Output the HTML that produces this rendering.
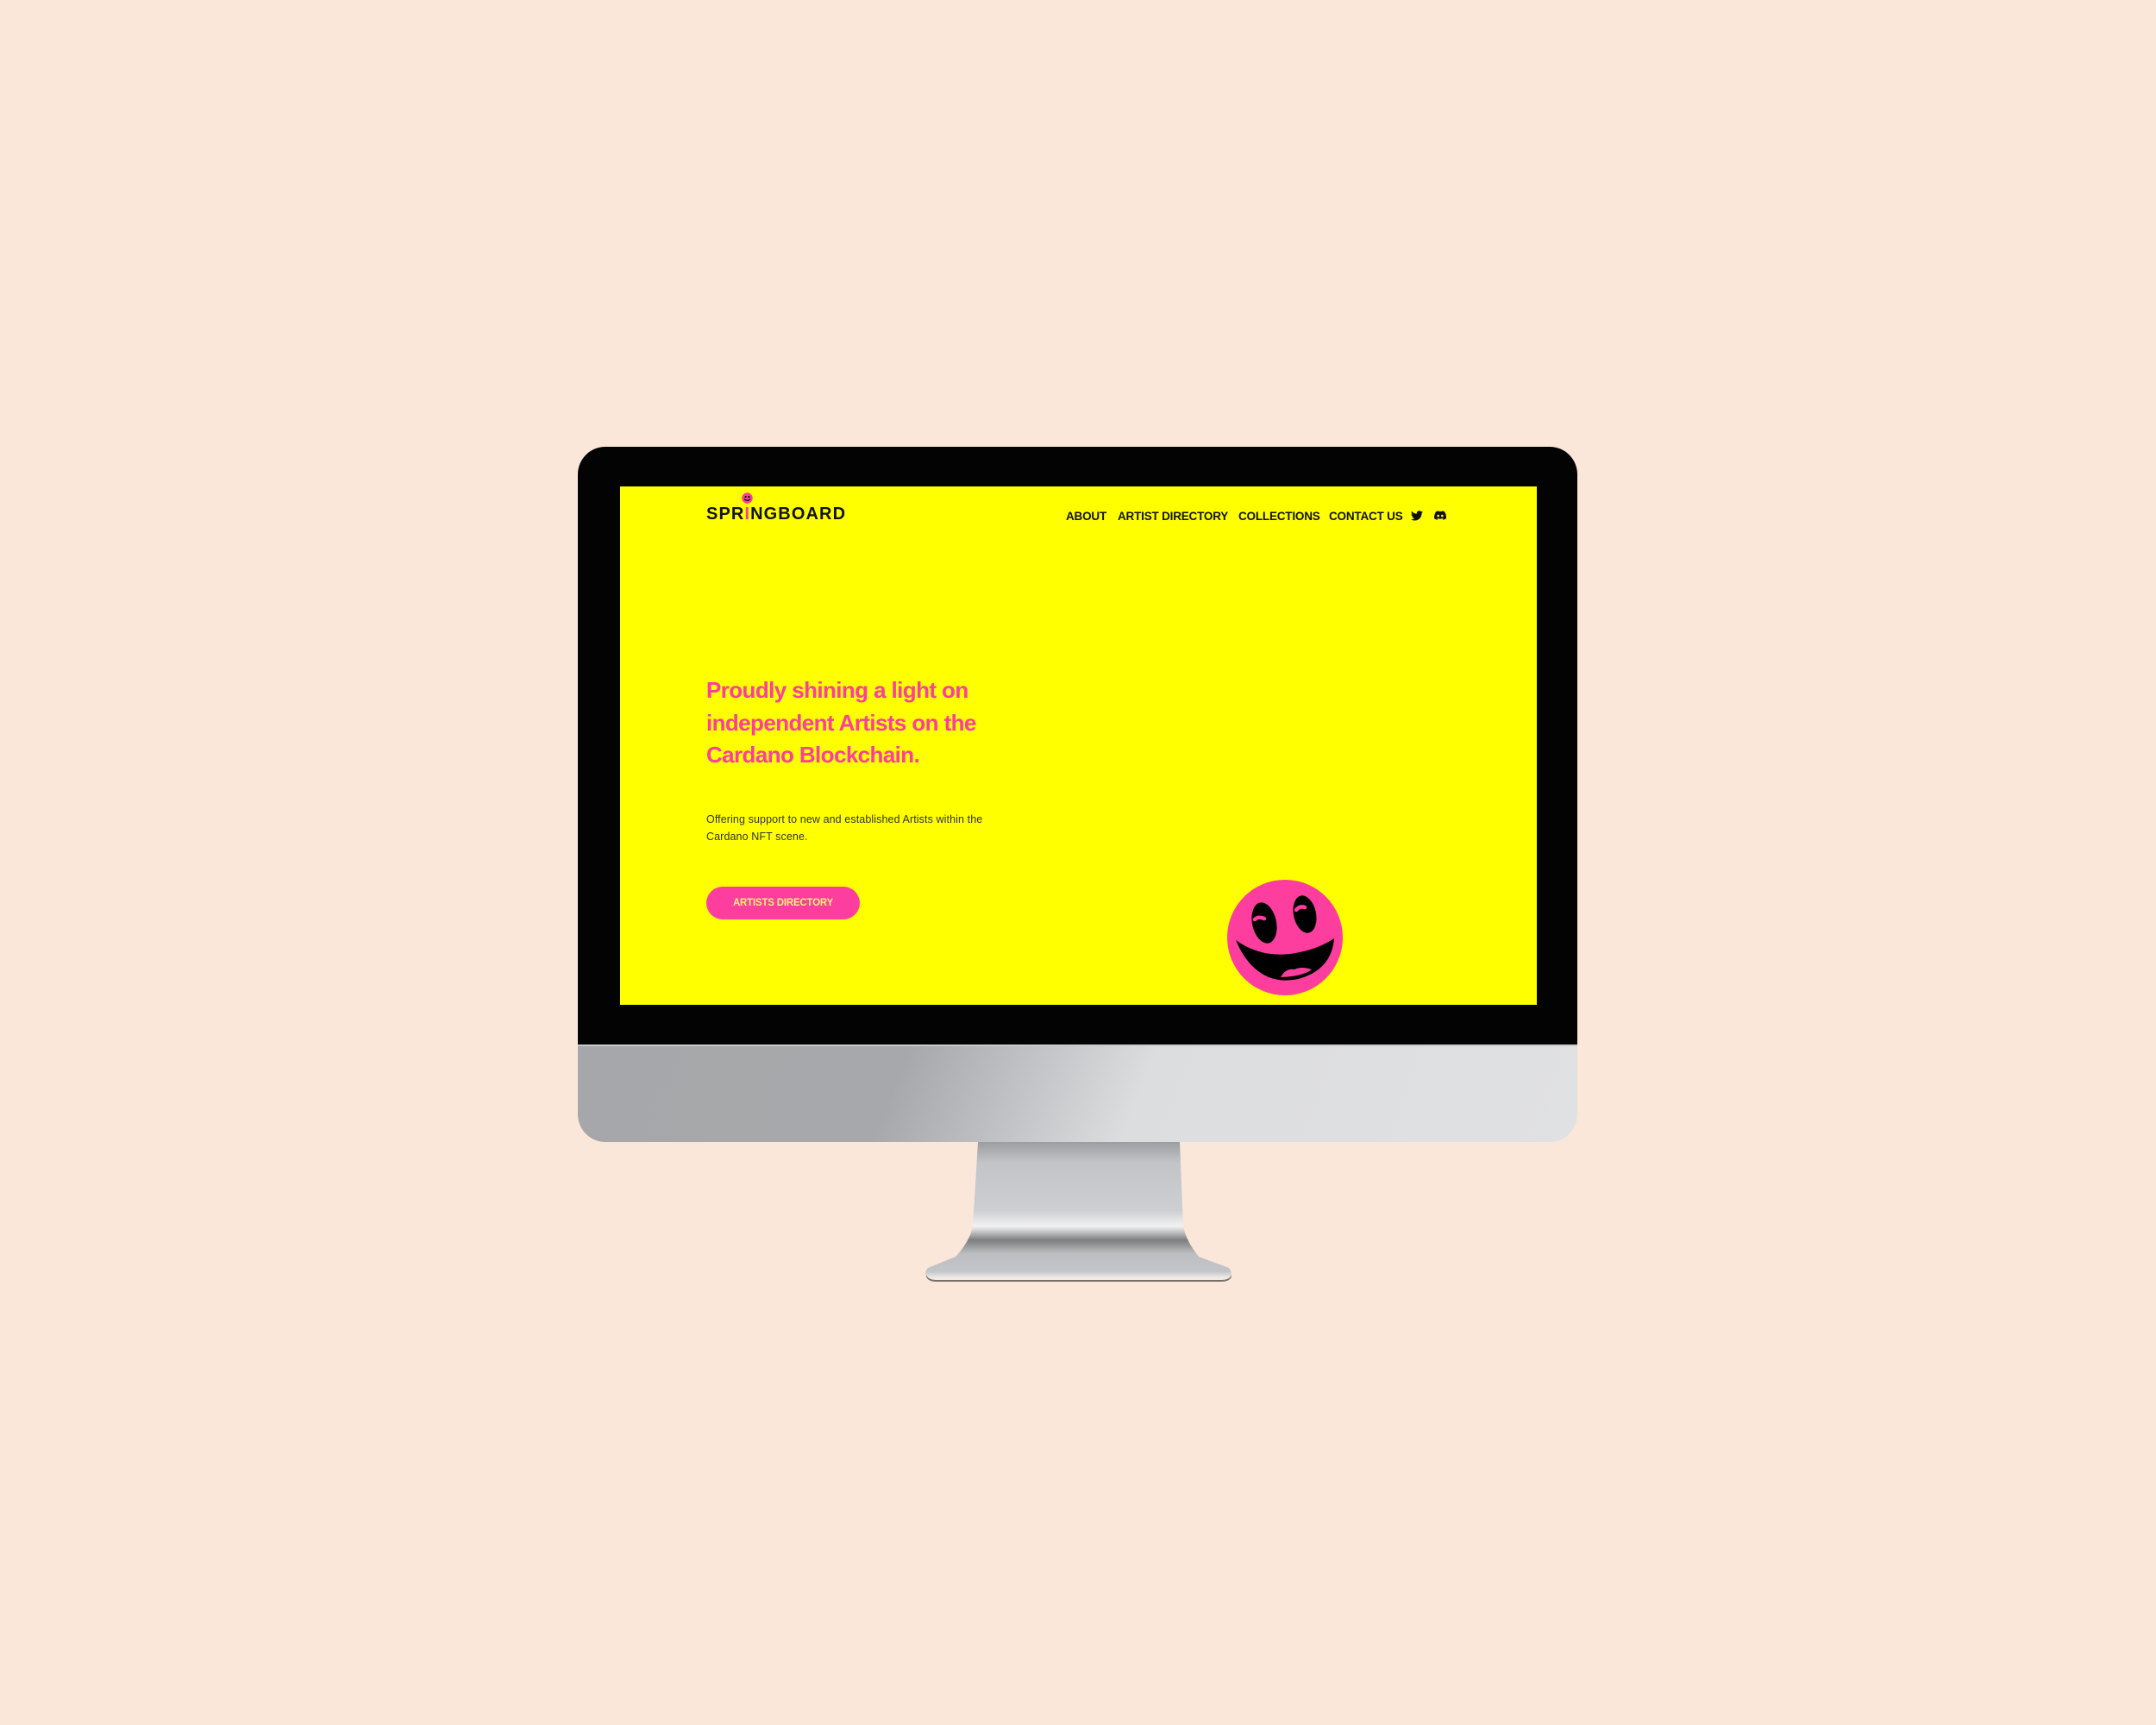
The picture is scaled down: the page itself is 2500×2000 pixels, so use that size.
<!DOCTYPE html>
<html><head><style>
*{margin:0;padding:0;box-sizing:border-box}
body{width:2500px;height:2000px;background:#fbe7d9;position:relative;overflow:hidden;font-family:"Liberation Sans",sans-serif}
.frame{position:absolute;left:670px;top:518px;width:1159px;height:720px;background:#030303;border-radius:32px 32px 0 0}
.chin{position:absolute;left:670px;top:1211px;width:1159px;height:113px;border-radius:0 0 32px 32px;border-top:2px solid #c9cacc;background:linear-gradient(112deg,#a6a7aa 0%,#a7a8ab 32%,#c3c4c7 45%,#dcdddf 56%,#e0e1e2 100%)}
.screen{position:absolute;left:719px;top:564px;width:1063px;height:601px;background:#ffff00;overflow:hidden}
.abs{position:absolute;white-space:nowrap}
.logo{left:100px;top:21px;font-weight:bold;font-size:20px;letter-spacing:1.1px;color:#111}
.nav{top:27px;font-weight:bold;font-size:13.5px;color:#111;letter-spacing:-0.2px}
h1{position:absolute;left:100px;top:218px;font-size:26px;line-height:37.5px;font-weight:bold;color:#fd3e9e;letter-spacing:-0.6px;white-space:nowrap}
p{position:absolute;left:100px;top:376px;font-size:12.5px;line-height:20px;color:#333;letter-spacing:0.1px;white-space:nowrap}
.btn{position:absolute;left:100px;top:464px;width:178px;height:38px;border-radius:19px;background:#fd3e9e;color:#fff27a;font-weight:bold;font-size:11.5px;text-align:center;line-height:38px;letter-spacing:-0.2px}
</style></head><body>
<div class="frame"></div>
<div class="chin"></div>
<svg class="abs" style="left:1060px;top:1322px" width="380" height="170" viewBox="0 0 380 170">
<defs><linearGradient id="n" x1="0" y1="0" x2="0" y2="1">
<stop offset="0" stop-color="#9c9da0"/><stop offset="0.15" stop-color="#c3c4c7"/><stop offset="0.5" stop-color="#cdced1"/><stop offset="0.62" stop-color="#f2f2f3"/><stop offset="0.72" stop-color="#7d7e80"/><stop offset="0.82" stop-color="#bdbec1"/><stop offset="0.95" stop-color="#c4c5c8"/><stop offset="1" stop-color="#eeeeee"/></linearGradient></defs>
<path d="M74 2 L308 2 L312 100 Q316 118 330 135 L365 148 Q372 158 362 160 L20 160 Q8 158 16 148 L48 135 Q64 118 68 100 Z" fill="url(#n)"/>
<path d="M14 156 Q16 162 26 162 L356 162 Q366 162 368 156 L368 158 Q366 164 356 164 L26 164 Q16 164 14 158Z" fill="#7a7068"/>
</svg>
<div class="screen">
 <div class="abs logo">SPR<span style="color:#fd3e9e">I</span>NGBOARD</div>
 <svg class="abs" style="left:141px;top:7px" width="13" height="13" viewBox="0 0 13 13"><circle cx="6.5" cy="6.5" r="6.2" fill="#fd3e9e"/><circle cx="4.6" cy="5" r="1.1" fill="#000"/><circle cx="8.4" cy="5" r="1.1" fill="#000"/><path d="M3 7.5 Q6.5 11 10 7.5" stroke="#000" stroke-width="1.2" fill="none"/></svg>
 <div class="abs nav" style="left:517px">ABOUT</div>
 <div class="abs nav" style="left:577px">ARTIST DIRECTORY</div>
 <div class="abs nav" style="left:717px">COLLECTIONS</div>
 <div class="abs nav" style="left:822px">CONTACT US</div>
 <svg class="abs" style="left:917px;top:28px" width="14" height="12" viewBox="0 0 24 20"><path d="M24 2.4a10 10 0 0 1-2.8.8A5 5 0 0 0 23.3.5a9.8 9.8 0 0 1-3.1 1.2A4.9 4.9 0 0 0 11.8 6 14 14 0 0 1 1.7.9a4.9 4.9 0 0 0 1.5 6.6A4.9 4.9 0 0 1 1 6.9a4.9 4.9 0 0 0 3.9 4.8 4.9 4.9 0 0 1-2.2.1 4.9 4.9 0 0 0 4.6 3.4A9.9 9.9 0 0 1 0 17.2 14 14 0 0 0 7.5 19.4c9 0 14-7.5 14-14v-.6A10 10 0 0 0 24 2.4z" fill="#111"/></svg>
 <svg class="abs" style="left:944px;top:28px" width="14" height="11" viewBox="0 0 24 18"><path d="M20.3 1.5A19.8 19.8 0 0 0 15.4 0l-.6 1.3a18 18 0 0 0-5.5 0L8.6 0a19.7 19.7 0 0 0-4.9 1.5C.6 6.2-.3 10.7.1 15.2A20 20 0 0 0 6.1 18l1.3-2a13 13 0 0 1-2-1l.5-.4a14 14 0 0 0 12.2 0l.5.4a13 13 0 0 1-2 1l1.3 2a20 20 0 0 0 6-2.8c.5-5.2-.8-9.7-3.6-13.7zM8 12.4c-1.2 0-2.2-1.1-2.2-2.4S6.8 7.6 8 7.6s2.2 1.1 2.2 2.4-1 2.4-2.2 2.4zm8 0c-1.2 0-2.2-1.1-2.2-2.4s1-2.4 2.2-2.4 2.2 1.1 2.2 2.4-1 2.4-2.2 2.4z" fill="#111"/></svg>
 <h1>Proudly shining a light on<br>independent Artists on the<br>Cardano Blockchain.</h1>
 <p>Offering support to new and established Artists within the<br>Cardano NFT scene.</p>
 <div class="btn">ARTISTS DIRECTORY</div>
 <svg class="abs" style="left:702px;top:454px" width="140" height="140" viewBox="0 0 140 140">
  <circle cx="69" cy="69" r="67" fill="#fd3e9e"/>
  <ellipse cx="45" cy="52" rx="14" ry="24" fill="#000" transform="rotate(-12 45 52)"/>
  <ellipse cx="92" cy="42" rx="13" ry="22" fill="#000" transform="rotate(-12 92 42)"/>
  <path d="M34 48 Q38 44 45 47" stroke="#fd3e9e" stroke-width="4.5" fill="none" stroke-linecap="round"/>
  <path d="M82 37 Q86 32 92 34" stroke="#fd3e9e" stroke-width="4.5" fill="none" stroke-linecap="round"/>
  <path d="M12 72 Q40 92 75 88 Q105 84 126 70 Q124 98 100 111 Q75 124 50 115 Q25 104 12 72Z" fill="#000"/>
  <path d="M64 115 Q70 104 80 106 Q88 102 100 106 Q90 114 64 115Z" fill="#fd3e9e"/>
 </svg>
</div>
</body></html>
